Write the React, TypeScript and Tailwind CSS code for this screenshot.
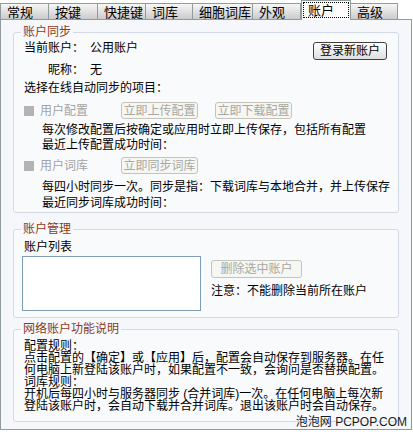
import type { ReactNode } from 'react';

const tabs = [
  { label: '常规', w: 'w-[49px]' },
  { label: '按键', w: 'w-[49px]' },
  { label: '快捷键', w: 'w-[48px]' },
  { label: '词库', w: 'w-[47px]' },
  { label: '细胞词库', w: 'w-[60px]' },
  { label: '外观', w: 'w-[48px]' },
  { label: '账户', w: 'w-[50px]', active: true },
  { label: '高级', w: 'w-[47px]' },
];

function Group({ title, className, children }: { title: string; className?: string; children: ReactNode }) {
  return (
    <fieldset className={`min-w-0 w-[386px] rounded-[3px] border border-[#d3dae5] bg-[#f9fafc] pl-[10px] pr-[11px] ${className ?? ''}`}>
      <legend className="ml-[-3px] px-[2px] text-[12px] leading-[12px] text-[#8e3a17]">{title}</legend>
      {children}
    </fieldset>
  );
}

function DisabledButton({ label, className }: { label: string; className?: string }) {
  return (
    <div
      className={`flex items-center justify-center rounded-[3px] border border-[#c4c4bc] bg-[#f6f6f3] text-[12px] leading-[12px] text-[#a8a8a0] ${className ?? ''}`}
    >
      {label}
    </div>
  );
}

function CheckRow({ label, children }: { label: string; children: ReactNode }) {
  return (
    <div className="flex h-[17px] items-center">
      <div className="flex w-[97px] items-center">
        <div className="h-[10px] w-[10px] bg-[#b3b3b3]" />
        <span className="ml-[6px] text-[#a3a3a3]">{label}</span>
      </div>
      {children}
    </div>
  );
}

export default function App() {
  return (
    <div className="relative h-[432px] w-[413px] overflow-hidden bg-white font-['Liberation_Sans','Noto_Sans_CJK_SC',sans-serif] text-[12px] leading-[12px] text-black">
      {/* Tabs */}
      <div className="flex h-[19px] items-end">
        {tabs.map((t, i) =>
          t.active ? (
            <div
              key={t.label}
              className={`${t.w} relative z-10 mb-[-1px] h-[20px] border-x border-t border-[#919b9c] bg-[#fdfdfd]`}
            >
              <div className="m-[1px] h-[16px] border border-dotted border-black pl-[4px] pt-[1px] text-[13px] leading-[13px]">
                {t.label}
              </div>
            </div>
          ) : (
            <div
              key={t.label}
              className={`${t.w} h-[16px] border-t border-r border-[#919b9c] bg-linear-to-b from-[#f7f7f7] to-[#cbcbcb] pl-[6px] pt-[2px] text-[13px] leading-[13px] ${i === 0 ? 'border-l' : ''}`}
            >
              {t.label}
            </div>
          )
        )}
      </div>

      {/* Panel */}
      <div className="h-[411px] w-[412px] border border-[#919b9c] bg-[#f5f7fa] pl-[12px] pt-[6px]">
        <Group title="账户同步" className="pb-[3px]">
          <div className="mt-[4px] flex items-start justify-between">
            <div className="flex">
              <span className="w-[60px] text-right">当前账户：</span>
              <span className="ml-[6px]">公用账户</span>
            </div>
            <div className="flex h-[18px] w-[74px] items-center justify-center rounded-[3px] border border-[#404040] bg-linear-to-b from-[#ffffff] to-[#dedede]">
              登录新账户
            </div>
          </div>
          <div className="mt-[4px] flex">
            <span className="w-[60px] text-right">昵称：</span>
            <span className="ml-[6px]">无</span>
          </div>
          <div className="mt-[6px]">选择在线自动同步的项目：</div>
          <div className="mt-[8px]">
            <CheckRow label="用户配置">
              <DisabledButton label="立即上传配置" className="h-[17px] w-[77px]" />
              <DisabledButton label="立即下载配置" className="ml-[17px] h-[17px] w-[77px]" />
            </CheckRow>
          </div>
          <div className="mt-[5px] whitespace-nowrap pl-[18px]">每次修改配置后按确定或应用时立即上传保存，包括所有配置</div>
          <div className="mt-[3px] pl-[18px]">最近上传配置成功时间：</div>
          <div className="mt-[6px]">
            <CheckRow label="用户词库">
              <DisabledButton label="立即同步词库" className="h-[17px] w-[77px]" />
            </CheckRow>
          </div>
          <div className="mt-[7px] whitespace-nowrap pl-[18px]">每四小时同步一次。同步是指：下载词库与本地合并，并上传保存</div>
          <div className="mt-[4px] pl-[18px]">最近同步词库成功时间：</div>
        </Group>

        <Group title="账户管理" className="mt-[10px] pb-[6px]">
          <div className="mt-[6px]">账户列表</div>
          <div className="ml-[-2px] mt-[3px] flex">
            <div className="h-[55px] w-[179px] border border-[#7f9db9] bg-white" />
            <div className="ml-[10px]">
              <DisabledButton label="删除选中账户" className="mt-[4px] h-[18px] w-[91px]" />
              <div className="mt-[7px] whitespace-nowrap">注意：不能删除当前所在账户</div>
            </div>
          </div>
        </Group>

        <Group title="网络账户功能说明" className="mt-[5px] pb-[9px]">
          <div className="mt-[5px] whitespace-nowrap leading-[12px]">
            <div>配置规则：</div>
            <div>点击配置的【确定】或【应用】后，配置会自动保存到服务器。在任</div>
            <div>何电脑上新登陆该账户时，如果配置不一致，会询问是否替换配置。</div>
            <div>词库规则：</div>
            <div>开机后每四小时与服务器同步 (合并词库)一次。在任何电脑上每次新</div>
            <div>登陆该账户时，会自动下载并合并词库。退出该账户时会自动保存。</div>
          </div>
        </Group>
      </div>

      {/* watermark */}
      <div className="absolute right-[6px] top-[416px] whitespace-nowrap text-[12px] leading-[12px] text-[#1a1a1a]">
        泡泡网 PCPOP.COM
      </div>
    </div>
  );
}
